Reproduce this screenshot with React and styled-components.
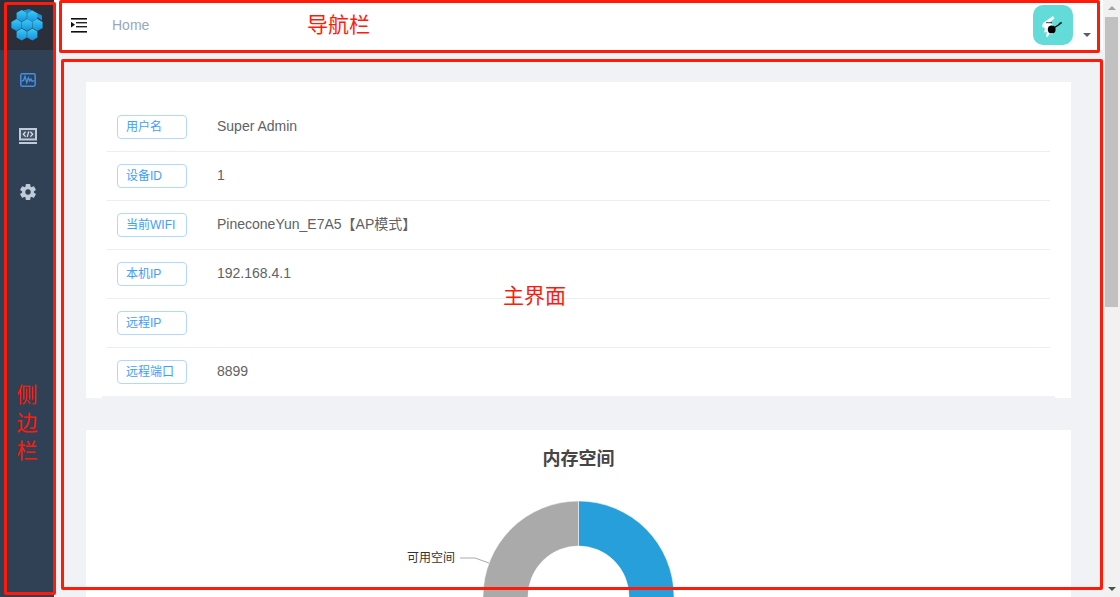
import React from "react";
import styled, { createGlobalStyle } from "styled-components";

const Global = createGlobalStyle`
  html, body { margin: 0; padding: 0; height: 100%; overflow: hidden; }
  body { font-family: "Liberation Sans", "Noto Sans CJK SC", sans-serif; background: #fff; }
`;

const Page = styled.div`
  position: relative;
  display: flex;
  width: 1120px;
  height: 597px;
  overflow: hidden;
`;

const Sidebar = styled.aside`
  flex: 0 0 54px;
  display: flex;
  flex-direction: column;
  background: #304156;
`;

const LogoBox = styled.div`
  height: 50px;
  display: flex;
  align-items: center;
  justify-content: center;
  background: #2b2f3a;
`;

const MenuItem = styled.div`
  box-sizing: border-box;
  height: 56px;
  padding: 3px 0 0 2px;
  display: flex;
  align-items: center;
  justify-content: center;
  color: ${(p) => (p.$active ? "#3f8fe6" : "#bfcbd9")};
`;

const Main = styled.main`
  flex: 1;
  min-width: 0;
  display: flex;
  flex-direction: column;
  background: #f0f2f5;
`;

const Navbar = styled.header`
  flex: 0 0 50px;
  display: flex;
  align-items: center;
  padding: 0 12px 0 17px;
  background: #fff;
`;

const Crumb = styled.span`
  margin-left: 25px;
  font-size: 14px;
  color: #97a8be;
`;

const Avatar = styled.div`
  margin-left: auto;
  width: 40px;
  height: 40px;
  border-radius: 10px;
  overflow: hidden;
  background: #63dbd8;
`;

const Caret = styled.span`
  align-self: flex-end;
  margin: 0 0 13px 10px;
  width: 0;
  height: 0;
  border-style: solid;
  border-width: 4px 4.5px 0;
  border-color: #5a5e66 transparent transparent;
`;

const Content = styled.div`
  flex: 1;
  min-height: 0;
  padding: 32px;
  overflow: hidden;
`;

const InfoCard = styled.section`
  padding: 21px 21px 0;
  background: #fff;
`;

const Row = styled.div`
  box-sizing: border-box;
  height: ${(p) => (p.$last ? "48px" : "49px")};
  display: flex;
  align-items: center;
  padding-left: 10px;
  border-bottom: ${(p) => (p.$last ? "none" : "1px solid #ebeef5")};
`;

const Tag = styled.span`
  box-sizing: border-box;
  flex: 0 0 70px;
  height: 24px;
  padding: 0 8px;
  border: 1px solid #b3d8ff;
  border-radius: 4px;
  font-size: 12px;
  line-height: 22px;
  white-space: nowrap;
  color: #409eff;
`;

const Value = styled.span`
  display: block;
  height: 20px;
  margin: 0 0 2px 30px;
  font-size: 14px;
  line-height: 20px;
  color: #606266;
`;

const TableEdge = styled.div`
  height: 2px;
  margin: 0 -5px;
  background: #f0f2f5;
`;

const ChartCard = styled.section`
  margin-top: 32px;
  padding-top: 16px;
  height: 300px;
  background: #fff;
`;

const ChartTitle = styled.h2`
  margin: 0 0 18px;
  font-size: 18px;
  line-height: 26px;
  font-weight: 700;
  text-align: center;
  color: #464646;
`;

const ChartSvg = styled.svg`
  display: block;
`;

const ChartLabel = styled.text`
  font-size: 12px;
  fill: #333;
`;

const Scrollbar = styled.div`
  flex: 0 0 17px;
  display: flex;
  flex-direction: column;
  align-items: center;
  background: #f1f1f1;
`;

const ArrowUp = styled.span`
  margin-top: 6px;
  width: 0;
  height: 0;
  border-style: solid;
  border-width: 0 4px 4px;
  border-color: transparent transparent #a3a3a3;
`;

const Thumb = styled.div`
  margin-top: 7px;
  width: 13px;
  height: 290px;
  background: #c1c1c1;
`;

const ArrowDown = styled.span`
  margin-top: auto;
  margin-bottom: 6px;
  width: 0;
  height: 0;
  border-style: solid;
  border-width: 4px 4px 0;
  border-color: #505050 transparent transparent;
`;

const Frame = styled.div`
  position: absolute;
  box-sizing: border-box;
  left: ${(p) => p.$x}px;
  top: ${(p) => p.$y}px;
  width: ${(p) => p.$w}px;
  height: ${(p) => p.$h}px;
  border: 3px solid #ff1a0a;
  border-radius: 2px;
  pointer-events: none;
`;

const Note = styled.div`
  position: absolute;
  left: ${(p) => p.$x}px;
  top: ${(p) => p.$y}px;
  width: ${(p) => (p.$vertical ? "22px" : "auto")};
  font-size: 21px;
  line-height: ${(p) => (p.$vertical ? "28px" : "26px")};
  text-align: center;
  color: #ff1a0a;
  white-space: ${(p) => (p.$vertical ? "normal" : "nowrap")};
`;

const hexPath = (cx, cy, r = 5.9) => {
  const pts = [];
  for (let i = 0; i < 6; i++) {
    const a = (Math.PI / 3) * i - Math.PI / 2;
    pts.push(`${(cx + r * Math.cos(a)).toFixed(2)},${(cy + r * Math.sin(a)).toFixed(2)}`);
  }
  return pts.join(" ");
};

const Logo = () => (
  <svg width="34" height="34" viewBox="0 0 34 34">
    <defs>
      <linearGradient id="hexFill" x1="0" y1="0" x2="0" y2="1">
        <stop offset="0" stopColor="#3ccbf5" />
        <stop offset="1" stopColor="#1690dc" />
      </linearGradient>
    </defs>
    <polygon points="13,2.5 19,1 32,7.5 32,12.5 27,9 19,6" fill="#1c8fd8" />
    {[
      [11.7, 7.8],
      [22.3, 8.4],
      [6.5, 17],
      [17, 17],
      [27.5, 17],
      [11.7, 26.5],
      [22.3, 26.5],
    ].map(([x, y]) => (
      <polygon key={`${x}-${y}`} points={hexPath(x, y)} fill="url(#hexFill)" />
    ))}
  </svg>
);

const ActivityIcon = () => (
  <svg width="16" height="14" viewBox="0 0 16 14" fill="none" stroke="currentColor">
    <rect x="0.8" y="0.8" width="14.4" height="12.4" rx="1.4" strokeWidth="1.5" />
    <path d="M1.5 8l2-.5L5 3.5l1.8 6L8.4 5l1.3 3 1.2-2 1.2 2.5 2.4-.8" strokeWidth="1.4" />
  </svg>
);

const CodeIcon = () => (
  <svg width="18" height="16" viewBox="0 0 18 16">
    <rect width="18" height="12.5" fill="currentColor" />
    <rect x="2" y="2" width="14" height="8.5" fill="#465669" />
    <path
      d="M6.6 3.8 4.3 6.2l2.3 2.4M11.4 3.8l2.3 2.4-2.3 2.4M9.8 3.4 8.2 9"
      fill="none"
      stroke="#d5dde6"
      strokeWidth="1.3"
    />
    <rect y="14" width="18" height="2" fill="currentColor" />
  </svg>
);

const GearIcon = () => (
  <svg width="16" height="16" viewBox="0 0 16 16" fill="currentColor">
    <circle cx="8" cy="8" r="6" />
    {[0, 60, 120, 180, 240, 300].map((deg) => (
      <rect key={deg} x="5.6" y="0" width="4.8" height="4" rx="1" transform={`rotate(${deg} 8 8)`} />
    ))}
    <circle cx="8" cy="8" r="2.7" fill="#304156" />
  </svg>
);

const OutdentIcon = () => (
  <svg width="16" height="15" viewBox="0 0 16 15">
    <rect y="0" width="16" height="1.6" fill="#111" />
    <rect x="5" y="4" width="11" height="1.4" fill="#222" />
    <rect x="5" y="8" width="11" height="1.4" fill="#222" />
    <rect y="13" width="16" height="1.6" fill="#111" />
    <polygon points="0,3.8 4,6.7 0,9.6" fill="#111" />
  </svg>
);

const Rabbit = () => (
  <svg width="40" height="40" viewBox="0 0 40 40">
    <path
      fill="#fff"
      d="M10 18l10-7 1.5 2.5-5 4 3 2 2 4-2 6-3-1-2 4-1.5-1.5 1-4-3 .5 1-4-3-2z"
    />
    <circle cx="18.7" cy="24.4" r="3.9" fill="#000" />
    <path d="M20 23.5l7-4.5" stroke="#000" strokeWidth="1.2" />
    <path d="M26 19l2.7-1.6" stroke="#222" strokeWidth="1.8" />
    <path d="M13 17.7h6" stroke="#111" strokeWidth="0.8" />
  </svg>
);

const ringHalf = (cx, cy, R, r, right) => {
  const s = right ? 1 : 0;
  const back = right ? 0 : 1;
  return `M${cx} ${cy - R}A${R} ${R} 0 0 ${s} ${cx} ${cy + R}L${cx} ${cy + r}A${r} ${r} 0 0 ${back} ${cx} ${cy - r}Z`;
};

const Donut = () => (
  <ChartSvg width="985" height="240" viewBox="0 0 985 240">
    <path d={ringHalf(492.5, 106.5, 95.5, 50.5, true)} fill="#269fdb" stroke="#fff" strokeWidth="0.5" />
    <path d={ringHalf(492.5, 106.5, 95.5, 50.5, false)} fill="#aaaaaa" stroke="#fff" strokeWidth="0.5" />
    <path d="M374 68h15l14 5" fill="none" stroke="#aaaaaa" />
    <ChartLabel x="321" y="72">可用空间</ChartLabel>
  </ChartSvg>
);

const rows = [
  ["用户名", "Super Admin"],
  ["设备ID", "1"],
  ["当前WIFI", "PineconeYun_E7A5【AP模式】"],
  ["本机IP", "192.168.4.1"],
  ["远程IP", ""],
  ["远程端口", "8899"],
];

export default function App() {
  return (
    <Page>
      <Global />
      <Sidebar>
        <LogoBox>
          <Logo />
        </LogoBox>
        <MenuItem $active>
          <ActivityIcon />
        </MenuItem>
        <MenuItem>
          <CodeIcon />
        </MenuItem>
        <MenuItem>
          <GearIcon />
        </MenuItem>
      </Sidebar>
      <Main>
        <Navbar>
          <OutdentIcon />
          <Crumb>Home</Crumb>
          <Avatar>
            <Rabbit />
          </Avatar>
          <Caret />
        </Navbar>
        <Content>
          <InfoCard>
            {rows.map(([label, value], i) => (
              <Row key={label} $last={i === rows.length - 1}>
                <Tag>{label}</Tag>
                <Value>{value}</Value>
              </Row>
            ))}
            <TableEdge />
          </InfoCard>
          <ChartCard>
            <ChartTitle>内存空间</ChartTitle>
            <Donut />
          </ChartCard>
        </Content>
      </Main>
      <Scrollbar>
        <ArrowUp />
        <Thumb />
        <ArrowDown />
      </Scrollbar>
      <Frame $x={4} $y={2} $w={52} $h={593} />
      <Frame $x={59} $y={0} $w={1041} $h={53} />
      <Frame $x={61} $y={59} $w={1042} $h={531} />
      <Note $x={307} $y={12}>导航栏</Note>
      <Note $x={503} $y={283}>主界面</Note>
      <Note $x={16} $y={381} $vertical>侧边栏</Note>
    </Page>
  );
}
